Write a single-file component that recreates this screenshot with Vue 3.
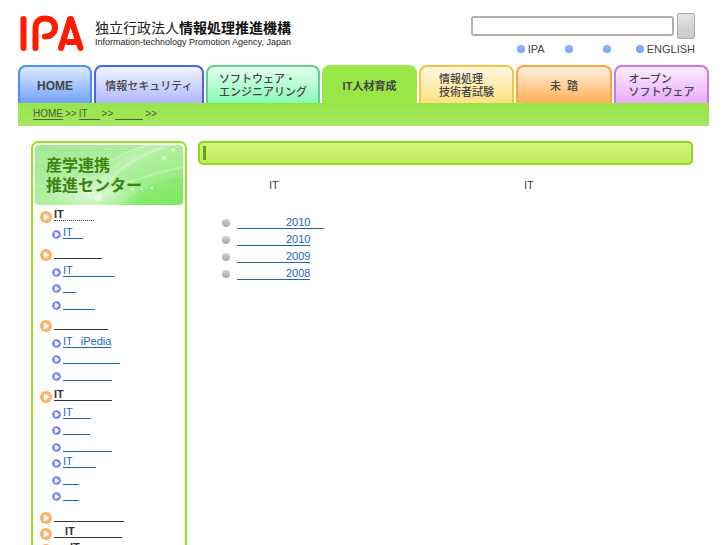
<script setup>
const tabs = [
  { lines: ['HOME'], tone: 'home' },
  { lines: ['情報セキュリティ'], tone: 'security' },
  { lines: ['ソフトウェア・', 'エンジニアリング'], tone: 'software' },
  { lines: ['IT人材育成'], tone: 'current' },
  { lines: ['情報処理', '技術者試験'], tone: 'exam' },
  { lines: ['未  踏'], tone: 'mito' },
  { lines: ['オープン', 'ソフトウェア'], tone: 'oss' },
]

// before / after: widths of the blank runs around the label
const groups = [
  { head: { text: 'IT', after: 30, dotted: true }, subs: [{ text: 'IT', after: 10 }] },
  { head: { before: 48 }, subs: [{ text: 'IT', after: 42 }, { before: 13 }, { before: 32 }] },
  { head: { before: 54 }, subs: [{ text: 'IT', after: 8, tail: 'iPedia' }, { before: 57 }, { before: 49 }] },
  {
    head: { text: 'IT', after: 48 },
    subs: [{ text: 'IT', after: 18 }, { before: 27 }, { before: 49 }, { text: 'IT', after: 23 }, { before: 16 }, { before: 16 }],
  },
  { head: { before: 70 }, subs: [] },
  { head: { before: 11, text: 'IT', after: 47 }, subs: [] },
  { head: { before: 16, text: 'IT', after: 30 }, subs: [] },
]

const years = [
  { text: '2010', after: 14 },
  { text: '2010', after: 0 },
  { text: '2009', after: 0 },
  { text: '2008', after: 0 },
]

const px = (n) => ({ width: (n || 0) + 'px' })
</script>

<template>
  <div class="page">
    <header class="top">
      <a class="brand" href="#">
        <svg class="logo" viewBox="0 0 66 38" width="66" height="38" aria-hidden="true">
          <g fill="none" stroke="#ff1a00" stroke-width="6" stroke-linecap="round" stroke-linejoin="round">
            <path d="M3.500 5V34" />
            <path d="M15.500 34V14C15.500 8 19 4.500 25 4.500C31 4.500 35 8 35 13.500C35 19 31 22.500 25 22.500" />
            <path d="M41 34L50 5H51L60.500 34" />
            <path d="M48 28H56" />
          </g>
        </svg>
        <span class="names">
          <span class="ja">独立行政法人<b>情報処理推進機構</b></span>
          <span class="en">Information-technology Promotion Agency, Japan</span>
        </span>
      </a>
      <div class="tools">
        <form class="search" @submit.prevent>
          <input class="query" type="text" name="q" />
          <button class="go" type="submit"></button>
        </form>
        <nav class="quick">
          <a href="#"><i class="dot"></i>IPA</a>
          <a class="empty" href="#"><i class="dot"></i></a>
          <a class="empty" href="#"><i class="dot"></i></a>
          <a href="#"><i class="dot"></i>ENGLISH</a>
        </nav>
      </div>
    </header>

    <nav class="tabs">
      <a v-for="t in tabs" :key="t.tone" href="#" class="tab" :class="t.tone">
        <span><span v-for="l in t.lines" :key="l" class="line">{{ l }}</span></span>
      </a>
    </nav>

    <nav class="crumbs">
      <a href="#">HOME</a><span>&gt;&gt;</span>
      <a href="#">IT<i class="blank" :style="px(12)"></i></a><span>&gt;&gt;</span>
      <a href="#"><i class="blank" :style="px(28)"></i></a><span>&gt;&gt;</span>
    </nav>

    <div class="body">
      <aside class="side">
        <h2 class="banner">
          <svg class="rays" viewBox="0 0 147 60" preserveAspectRatio="none" aria-hidden="true">
            <defs>
              <linearGradient id="bg" x1="0" y1="0" x2="1" y2="1">
                <stop offset="0" stop-color="#a4e896" />
                <stop offset="0.500" stop-color="#b0f0a0" />
                <stop offset="1" stop-color="#80ea64" />
              </linearGradient>
              <radialGradient id="glow">
                <stop offset="0" stop-color="#fff" stop-opacity="0.600" />
                <stop offset="1" stop-color="#fff" stop-opacity="0" />
              </radialGradient>
            </defs>
            <rect width="147" height="60" fill="url(#bg)" />
            <ellipse cx="58" cy="50" rx="50" ry="24" fill="url(#glow)" />
            <path d="M50 60Q80 20 140 0H110Q70 16 50 60Z" fill="#fff" opacity="0.150" />
            <path d="M147 32Q110 36 86 60H147Z" fill="#62df45" opacity="0.200" />
            <g fill="none" stroke="#fff" opacity="0.250">
              <path d="M0 40Q30 44 62 54" />
              <path d="M0 16Q36 22 62 54" />
              <path d="M62 54Q80 18 128 2" stroke-width="2" />
              <path d="M62 54Q90 34 147 22" stroke-width="2" />
              <path d="M76 16Q90 6 112 0" stroke-width="2" />
            </g>
            <g fill="#fff" opacity="0.600">
              <circle cx="63" cy="53" r="3" />
              <circle cx="128" cy="13" r="2" />
              <circle cx="137" cy="5" r="1.500" />
              <circle cx="106" cy="44" r="1.500" />
              <circle cx="116" cy="43" r="1.500" />
              <circle cx="53" cy="48" r="1.500" />
              <circle cx="97" cy="44" r="1.500" />
            </g>
          </svg>
          <span class="title">産学連携<br />推進センター</span>
        </h2>
        <ul class="menu">
          <li v-for="(g, i) in groups" :key="i" :class="g.subs.length ? 'branch' : 'leaf'">
            <div class="row">
              <svg class="big" viewBox="0 0 12 12" aria-hidden="true">
                <circle cx="6" cy="6" r="6" fill="#ffae62" />
                <circle cx="6" cy="6" r="3.500" fill="#ffc088" />
                <path d="M4 2.500L9.500 6L4 9.500Z" fill="#fff" />
              </svg>
              <a href="#" class="link" :class="{ dotted: g.head.dotted }"><i class="blank" :style="px(g.head.before)"></i>{{ g.head.text }}<i class="blank" :style="px(g.head.after)"></i></a>
            </div>
            <ul v-if="g.subs.length" class="subs">
              <li v-for="(s, j) in g.subs" :key="j" class="row">
                <svg class="small" viewBox="0 0 10 10" aria-hidden="true">
                  <circle cx="5" cy="5" r="4.800" fill="#6f80f8" />
                  <path d="M3 2.500H5.500L8 5L5.500 7.500H3Z" fill="#fff" />
                </svg>
                <a href="#" class="link"><i class="blank" :style="px(s.before)"></i>{{ s.text }}<i class="blank" :style="px(s.after)"></i>{{ s.tail }}</a>
              </li>
            </ul>
          </li>
        </ul>
      </aside>

      <main class="main">
        <h1 class="heading"><i class="mark"></i></h1>
        <p class="lead"><span>IT</span><span>IT</span></p>
        <ul class="years">
          <li v-for="(y, i) in years" :key="i">
            <i class="ball"></i>
            <a href="#" class="link"><i class="blank" :style="px(49)"></i>{{ y.text }}<i class="blank" :style="px(y.after)"></i></a>
          </li>
        </ul>
      </main>
    </div>
  </div>
</template>

<style>
body {
  background: #fff;
}
</style>

<style scoped>
.page {
  height: 100vh;
  overflow: hidden;
  box-sizing: border-box;
  padding: 0 18px;
  font-family: "Liberation Sans", "Noto Sans CJK JP", sans-serif;
  font-size: 11px;
  color: #444;
}
ul {
  list-style: none;
  margin: 0;
  padding: 0;
}
a {
  color: inherit;
  text-decoration: none;
}
.blank {
  display: inline-block;
}
.top {
  display: flex;
  justify-content: space-between;
  height: 65px;
}
.brand {
  display: flex;
  padding: 14px 0 0 2px;
}
.logo {
  display: block;
}
.names {
  display: flex;
  flex-direction: column;
  padding: 5px 0 0 9px;
  color: #222;
  white-space: nowrap;
}
.ja {
  font-size: 14px;
  line-height: 18px;
}
.ja b {
  color: #111;
}
.en {
  font-size: 9px;
  line-height: 10px;
}
.tools {
  padding: 13px 14px 0 0;
}
.search {
  display: flex;
  align-items: center;
  gap: 3px;
}
.query {
  box-sizing: border-box;
  width: 203px;
  height: 20px;
  border: 2px solid #b0b0b0;
  border-radius: 3px;
  background: #fff;
}
.go {
  box-sizing: border-box;
  width: 18px;
  height: 26px;
  padding: 0;
  border: 1px solid #aaa;
  border-radius: 2px;
  background: linear-gradient(#e4e4e6, #c8c8cc);
}
.quick {
  display: flex;
  justify-content: flex-end;
  line-height: 14px;
  padding-top: 3px;
}
.quick a {
  display: flex;
  align-items: center;
  gap: 3px;
  margin-left: 20px;
}
.quick .empty + a {
  margin-left: 25px;
}
.quick .empty + .empty {
  margin-left: 30px;
}
.dot {
  width: 8px;
  height: 8px;
  border-radius: 50%;
  background: radial-gradient(circle at 50% 35%, #8cb8ff, #6a9af6);
}
.tabs {
  display: grid;
  grid-template-columns: 74fr 110fr 114fr 95fr 95fr 96fr 95fr;
  gap: 2px;
  height: 38px;
}
.tab {
  display: flex;
  align-items: center;
  justify-content: center;
  border: 2px solid;
  border-bottom: 0;
  border-radius: 8px 8px 0 0;
  padding-top: 2px;
  line-height: 13px;
  font-weight: 500;
  white-space: pre;
}
.line {
  display: block;
  color: #444;
}
.home {
  border-color: #4a90f4;
  background: linear-gradient(#dce9ff, #72a2fb);
  font-size: 12px;
  font-weight: 700;
}
.security {
  border-color: #4a62f0;
  background: linear-gradient(#f2f3ff, #aeb9ff);
}
.software {
  border-color: #62d08c;
  background: linear-gradient(#e2fff0, #88fab6);
}
.current {
  border-color: #98e648;
  background: #98e648;
  font-weight: 700;
}
.exam {
  border-color: #fbc23c;
  background: linear-gradient(#fff8e4, #ffe080);
}
.mito {
  border-color: #fba63c;
  background: linear-gradient(#fff0e0, #ffb055);
}
.oss {
  border-color: #cf74ee;
  background: linear-gradient(#faecff, #e9abfd);
}
.crumbs {
  display: flex;
  align-items: flex-start;
  gap: 2px;
  height: 18px;
  padding: 5px 0 0 15px;
  font-size: 10px;
  line-height: 11px;
  color: #4a5a3a;
  background: linear-gradient(#97e546, #a6e664);
}
.crumbs a {
  border-bottom: 1px solid #4a6a2a;
}
.body {
  display: flex;
  align-items: flex-start;
  gap: 11px;
  padding: 15px 16px 0 13px;
}
.side {
  box-sizing: border-box;
  flex: none;
  width: 156px;
  border: 2px solid #94e41c;
  border-radius: 7px 7px 0 0;
  padding: 2px 2px 0;
}
.banner {
  display: grid;
  margin: 0;
  border-radius: 4px;
  overflow: hidden;
  font-size: 16px;
  line-height: 20px;
  color: #3c8410;
  white-space: nowrap;
}
.banner > * {
  grid-area: 1 / 1;
}
.banner .title {
  z-index: 1;
}
.rays {
  width: 100%;
  height: 60px;
}
.title {
  padding: 11px 0 0 11px;
}
.menu {
  padding: 3px 0 0 5px;
}
.menu .branch {
  padding-bottom: 4px;
}
.row {
  display: flex;
  align-items: flex-start;
  height: 17px;
  font-weight: 700;
}
.leaf .row {
  height: 16px;
}
.link {
  line-height: 12px;
  border-bottom: 1px solid;
  white-space: nowrap;
  min-height: 12px;
}
.row .link {
  color: #333;
}
.row .dotted {
  border-bottom-style: dotted;
}
.big {
  width: 12px;
  height: 12px;
  margin: 3px 2px 0 0;
}
.subs {
  padding: 1px 0 0 12px;
}
.subs .row {
  height: 16px;
  font-weight: 400;
}
.subs .row:nth-child(even) {
  height: 17px;
}
.small {
  width: 9px;
  height: 9px;
  margin: 4px 2px 0 0;
}
.subs .link,
.years .link {
  color: #1c66c0;
}
.main {
  flex: 1;
  min-width: 0;
}
.heading {
  display: flex;
  align-items: center;
  margin: 0;
  height: 20px;
  padding-left: 3px;
  border: 2px solid #8fd61c;
  border-radius: 5px;
  background: linear-gradient(#d2f67c, #bdec5c);
}
.mark {
  width: 3px;
  height: 14px;
  background: #5fa80c;
}
.lead {
  display: grid;
  grid-template-columns: 255fr 169fr;
  margin: 12px 0 0;
  padding-left: 71px;
  line-height: 16px;
}
.years {
  padding: 23px 0 0 24px;
}
.years li {
  display: flex;
  align-items: flex-start;
  height: 17px;
}
.years .link {
  margin-left: 7px;
}
.ball {
  width: 8px;
  height: 8px;
  margin-top: 3px;
  border-radius: 50%;
  background: linear-gradient(#d0d0d0, #a8a8a8);
}
</style>
